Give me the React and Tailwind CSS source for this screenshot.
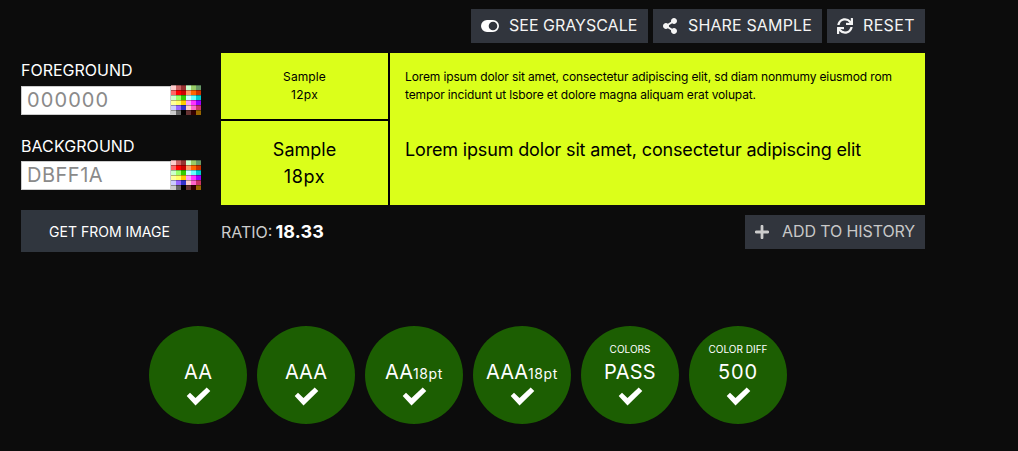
import { FaShareAlt, FaSync } from "react-icons/fa";

const PALETTE = [
  ["bg-[#ffcccc]", "bg-[#cc6666]", "bg-[#993333]", "bg-[#ccffcc]", "bg-[#99cc66]", "bg-[#669966]"],
  ["bg-[#ff6666]", "bg-[#ff0000]", "bg-[#cc0000]", "bg-[#ff9966]", "bg-[#ff6600]", "bg-[#cc3300]"],
  ["bg-[#ccffcc]", "bg-[#99ff66]", "bg-[#33cc00]", "bg-[#ccffff]", "bg-[#66ffff]", "bg-[#00cccc]"],
  ["bg-[#ffff99]", "bg-[#ffff66]", "bg-[#ffcc00]", "bg-[#ff99ff]", "bg-[#ff33ff]", "bg-[#9900ff]"],
  ["bg-[#ccccff]", "bg-[#9966ff]", "bg-[#3333cc]", "bg-[#ffcccc]", "bg-[#ff66cc]", "bg-[#cc3366]"],
  ["bg-[#cccccc]", "bg-[#666666]", "bg-[#000000]", "bg-[#663333]", "bg-[#330000]", "bg-[#996600]"],
];

function Palette() {
  return (
    <div className="grid h-[30px] w-[30px] grid-cols-6 grid-rows-6">
      {PALETTE.flat().map((c, i) => (
        <span key={i} className={`${c} border-t border-black/30`} />
      ))}
    </div>
  );
}

function ColorField({ label, value, labelClass = "pb-px", valueClass }) {
  return (
    <div>
      <div className={`h-[27px] text-[16px] leading-6 whitespace-nowrap ${labelClass}`}>{label}</div>
      <div className="flex h-[30px]">
        <div className={`mt-px h-[29px] w-[150px] border border-[#ccc] bg-white pl-[5px] text-[20px] leading-[27px] text-[#8a8a8a] ${valueClass}`}>
          {value}
        </div>
        <Palette />
      </div>
    </div>
  );
}

function BarButton({ icon, children, className }) {
  return (
    <button className={`flex h-[34px] items-center bg-[#31353d] pl-[10px] text-[16px] leading-6 whitespace-nowrap text-[#f4f4f4] ${className}`}>
      {icon}
      <span className="pb-[2px]">{children}</span>
    </button>
  );
}

function Toggle() {
  return (
    <svg viewBox="0 0 18 12" className="h-3 w-[18px]">
      <path fill="#fff" fillRule="evenodd" d="M6 0h6a6 6 0 0 1 0 12H6A6 6 0 0 1 6 0Zm6 1.7a4.3 4.3 0 1 0 0 8.6a4.3 4.3 0 0 0 0-8.6Z" />
    </svg>
  );
}

function Plus() {
  return (
    <svg viewBox="0 0 14 14" className="h-[14px] w-[14px]">
      <path d="M7 1.2v11.6M1.2 7h11.6" stroke="#ccc" strokeWidth="2.8" strokeLinecap="round" />
    </svg>
  );
}

function Badge({ title, note, suffix, className = "" }) {
  return (
    <div className="flex h-[98px] w-[98px] flex-col items-center rounded-full bg-[#1c5e02] text-white">
      <div className="mt-4 h-[15px] text-[10px] leading-[15px] whitespace-nowrap">{note}</div>
      <div className="h-[30px] text-[20px] leading-[30px] whitespace-nowrap">
        <span className={className}>{title}</span>
        {suffix && <span className="text-[14px] tracking-[0.6px]">{suffix}</span>}
      </div>
      <svg viewBox="-0.7 -0.4 24 18" className="h-[18px] w-6 overflow-visible">
        <path fill="#fff" d="M0 8.6L3.3 5.3L8.8 10.7L20 0L23.6 3.5L8.8 18Z" />
      </svg>
    </div>
  );
}

export default function App() {
  return (
    <div className="h-[451px] w-[1018px] overflow-hidden bg-[#0c0c0c] pl-[21px] font-['Inter',sans-serif] text-white">
      <div className="flex h-[53px] w-[904px] justify-end gap-[5px] pt-[9px]">
        <BarButton className="w-[177px] gap-[10px]" icon={<Toggle />}>SEE GRAYSCALE</BarButton>
        <BarButton className="w-[169px] gap-[11px] tracking-[0.14px]" icon={<FaShareAlt className="h-4 w-[14px]" />}>SHARE SAMPLE</BarButton>
        <BarButton className="w-[98px] gap-[10px] tracking-[0.35px]" icon={<FaSync className="h-4 w-4" />}>RESET</BarButton>
      </div>
      <div className="flex">
        <div className="w-[200px] pt-[5px]">
          <ColorField label="FOREGROUND" value="000000" valueClass="tracking-[1.1px]" />
          <div className="mt-[18px]">
            <ColorField label="BACKGROUND" value="DBFF1A" labelClass="pt-px tracking-[0.08px]" valueClass="tracking-[0.5px]" />
          </div>
          <button className="mt-5 h-[42px] w-[177px] bg-[#30363e] text-[14px]">GET FROM IMAGE</button>
        </div>
        <div className="w-[704px] text-black">
          <div className="flex h-[152px] gap-[2px] bg-black">
            <div className="flex w-[167px] flex-col gap-[2px] text-center">
              <div className="h-[66px] bg-[#dbff1a] pt-[15px] text-[12px] leading-[18px]">
                <p className="tracking-[0.1px]">Sample</p>
                <p className="tracking-[0.3px]">12px</p>
              </div>
              <div className="h-[84px] bg-[#dbff1a] pt-[15px] text-[18px] leading-[27px]">
                <p>Sample</p>
                <p className="tracking-[0.6px]">18px</p>
              </div>
            </div>
            <div className="w-[535px] bg-[#dbff1a] pt-[15px] pl-[15px] whitespace-nowrap">
              <p className="text-[12px] leading-[18px] tracking-[-0.13px]">
                Lorem ipsum dolor sit amet, consectetur adipiscing elit, sd diam nonmumy eiusmod rom
                <br />
                tempor incidunt ut lsbore et dolore magna aliquam erat volupat.
              </p>
              <p className="mt-8 text-[18px] leading-[27px] tracking-[-0.16px]">
                Lorem ipsum dolor sit amet, consectetur adipiscing elit
              </p>
            </div>
          </div>
          <div className="flex items-start justify-between pt-[10px]">
            <div className="mt-px flex h-8 items-baseline gap-[3px] leading-8">
              <span className="text-[16px] text-[#ccc]">RATIO:</span>
              <b className="text-[18px] tracking-[0.15px] text-white">18.33</b>
            </div>
            <button className="flex h-[34px] w-[180px] items-center gap-[13px] bg-[#31353d] pl-[10px] text-[16px] tracking-[-0.1px] whitespace-nowrap text-[#c8c8c8]">
              <Plus />
              <span className="pb-[2px]">ADD TO HISTORY</span>
            </button>
          </div>
        </div>
      </div>
      <div className="mt-[74px] ml-[128px] flex gap-[10px]">
        <Badge title="AA" />
        <Badge title="AAA" />
        <Badge title="AA" suffix="18pt" />
        <Badge title="AAA" suffix="18pt" />
        <Badge title="PASS" note="COLORS" className="tracking-[0.25px]" />
        <Badge title="500" note="COLOR DIFF" className="tracking-[0.9px]" />
      </div>
    </div>
  );
}
